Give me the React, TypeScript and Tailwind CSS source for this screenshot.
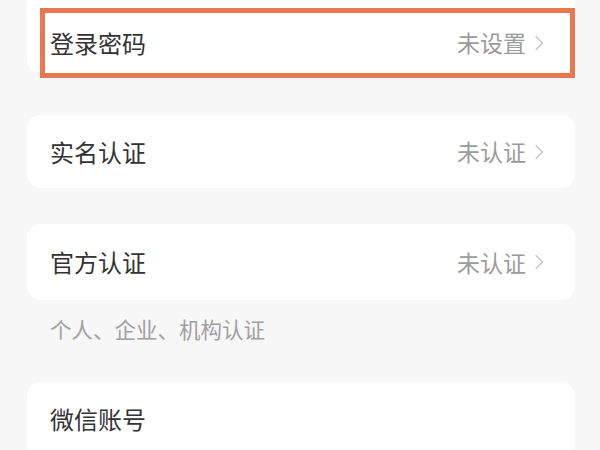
type Row = { label: string; value: string }

function Chevron() {
  return (
    <svg width="10" height="16" viewBox="0 0 10 16" fill="none" className="ml-[8px]">
      <path d="M2 1.5l6.5 6.5-6.5 6.5" stroke="#c2c2c2" strokeWidth="1.3" strokeLinecap="round" strokeLinejoin="round" />
    </svg>
  )
}

function Card({ row, className = '' }: { row: Row; className?: string }) {
  return (
    <div className={`bg-white flex items-center justify-between pl-[23px] pr-[31px] flex-shrink-0 ${className}`}>
      <span className="text-[24px] leading-none text-[#333333]">{row.label}</span>
      {row.value && (
        <span className="flex items-center text-[23px] leading-none text-[#9b9b9b]">
          {row.value}
          <Chevron />
        </span>
      )}
    </div>
  )
}

export default function App() {
  return (
    <div
      className="relative w-[600px] h-[450px] overflow-hidden bg-[#f7f7f8] pl-[27px] pr-[25px] flex flex-col"
      style={{ fontFamily: '"Noto Sans CJK SC", "Noto Sans", sans-serif' }}
    >
      <Card row={{ label: '登录密码', value: '未设置' }} className="h-[73px] pt-3 rounded-b-[14px]" />
      <Card row={{ label: '实名认证', value: '未认证' }} className="mt-[42px] h-[73px] rounded-[14px]" />
      <Card row={{ label: '官方认证', value: '未认证' }} className="mt-[36px] h-[76px] rounded-[14px]" />
      <div className="h-[82px] pl-[23px] pt-[17px] flex-shrink-0">
        <span className="block text-[21.5px] leading-[24px] text-[#a0a0a0]">个人、企业、机构认证</span>
      </div>
      <Card row={{ label: '微信账号', value: '' }} className="h-[73px] rounded-t-[14px]" />

      {/* orange highlight frame */}
      <div className="absolute left-[40px] top-[8px] w-[535px] h-[70px] border-[5px] border-[#e9774f]" />
    </div>
  )
}
